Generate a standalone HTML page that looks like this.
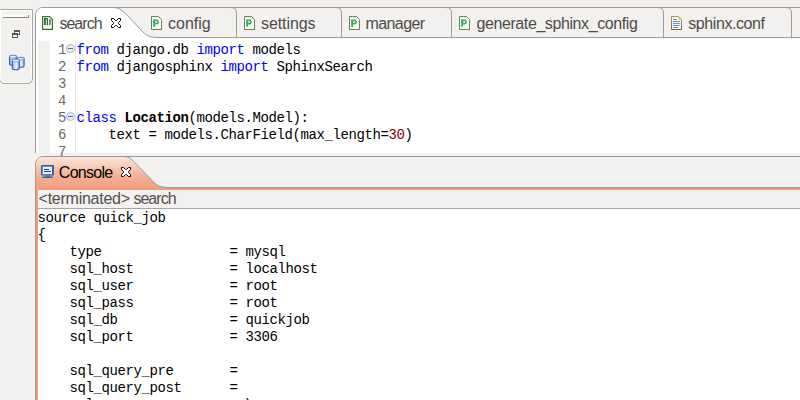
<!DOCTYPE html>
<html><head><meta charset="utf-8">
<style>
html,body{margin:0;padding:0;}
body{width:800px;height:400px;overflow:hidden;position:relative;background:#f2f1f0;font-family:"Liberation Sans",sans-serif;}
svg.full{position:absolute;left:0;top:0;width:800px;height:400px;}
.lbl{position:absolute;height:20px;line-height:20px;font-size:16px;color:#4e4b47;white-space:pre;}
.code{position:absolute;font-family:"Liberation Mono",monospace;font-size:14px;letter-spacing:-0.4px;line-height:17px;white-space:pre;color:#000;}
.ln{position:absolute;font-family:"Liberation Mono",monospace;font-size:14px;letter-spacing:-0.4px;line-height:17px;white-space:pre;color:#6e6a66;}
.kw{color:#0000ff;}
.num{color:#800000;}
.b{font-weight:bold;}
svg.ic{position:absolute;overflow:visible;}
</style></head>
<body>
<svg class="full" viewBox="0 0 800 400">
  <defs>
    <linearGradient id="og" x1="0" y1="157" x2="0" y2="190" gradientUnits="userSpaceOnUse">
      <stop offset="0" stop-color="#fbe6dc"/>
      <stop offset="0.5" stop-color="#f5b59c"/>
      <stop offset="1" stop-color="#f29c7c"/>
    </linearGradient>
  </defs>
  <!-- left trim panel -->
  <path d="M-1 9 H33 V78 Q33 84 27 84 H5 Q-1 84 -1 78 Z" fill="#f2f1f0"/>
  <path d="M0.5 84 V10.5 H31.5" fill="none" stroke="#ffffff"/>
  <path d="M31.5 10.5 V78 Q31.5 82.5 27 82.5 H5 Q0.5 82.5 0.5 78" fill="none" stroke="#ffffff"/>
  <path d="M-1 9.5 H32.5 V78 Q32.5 83.5 27 83.5 H5 Q-0.5 83.5 -0.5 78" fill="none" stroke="#aaa6a0"/>
  <rect x="3" y="15" width="25" height="2" fill="#ffffff"/>
  <rect x="3" y="17" width="26" height="1" fill="#8c8781"/>
  <rect x="28" y="15" width="1" height="3" fill="#8c8781"/>
  <!-- restore icon -->
  <g shape-rendering="crispEdges">
    <rect x="13" y="29" width="8" height="7" fill="#ffffff" opacity="0.4"/>
    <rect x="11" y="32" width="8" height="7" fill="#ffffff" opacity="0.4"/>
    <rect x="14" y="30" width="6" height="5" fill="#5a554f"/>
    <rect x="15" y="32" width="4" height="2" fill="#ffffff"/>
    <rect x="12" y="33" width="6" height="5" fill="#5a554f"/>
    <rect x="13" y="35" width="4" height="2" fill="#ffffff"/>
  </g>
  <!-- database icon -->
  <linearGradient id="cyl" x1="0" y1="0" x2="1" y2="0">
    <stop offset="0" stop-color="#93acd8"/>
    <stop offset="0.55" stop-color="#f2f6fc"/>
    <stop offset="1" stop-color="#8ea8d6"/>
  </linearGradient>
  <g stroke="#2d5fb5" stroke-width="1.1">
    <path d="M9.5 56.8 V63.7 A3.6 1.6 0 0 0 16.7 63.7 V56.8 A3.6 1.6 0 0 0 9.5 56.8 Z" fill="url(#cyl)"/>
    <ellipse cx="13.1" cy="56.8" rx="3.6" ry="1.3" fill="#e9eff9" stroke="#6f92cc" stroke-width="0.8"/>
    <path d="M17.5 58.8 V65.7 A3.3 1.6 0 0 0 24.1 65.7 V58.8 A3.3 1.6 0 0 0 17.5 58.8 Z" fill="url(#cyl)"/>
    <ellipse cx="20.8" cy="58.8" rx="3.3" ry="1.3" fill="#e9eff9" stroke="#6f92cc" stroke-width="0.8"/>
    <path d="M12.3 60.6 V68.2 A3.5 1.6 0 0 0 19.3 68.2 V60.6 A3.5 1.6 0 0 0 12.3 60.6 Z" fill="url(#cyl)"/>
    <ellipse cx="15.8" cy="60.6" rx="3.5" ry="1.3" fill="#e9eff9" stroke="#6f92cc" stroke-width="0.8"/>
  </g>

  <!-- editor frame -->
    <rect x="36" y="8" width="764" height="29.5" fill="#f2f1f0"/>
  <path d="M36 38 V13.5 C36 12 39.5 8 41.5 8 H113 C118 8 121 9.5 125 13 L143 32 C147 36 151 37.5 157 37.5 H36 Z" fill="#ffffff"/>
  <rect x="36" y="37" width="764" height="116" fill="#ffffff"/>
  <path d="M35.5 153 V13.5 C35.5 12 39.5 7.5 41.5 7.5 H800" fill="none" stroke="#9e9a95"/>
  <path d="M113 7.5 C118 7.5 121 9.5 125 13 L143 32 C147 36 151 37.5 157 37.5 H800" fill="none" stroke="#9e9a95"/>
  <path d="M231 7.5 Q236.5 7.5 236.5 13 V37.5" fill="none" stroke="#9e9a95"/>
  <path d="M336 7.5 Q341.5 7.5 341.5 13 V37.5" fill="none" stroke="#9e9a95"/>
  <path d="M446 7.5 Q451.5 7.5 451.5 13 V37.5" fill="none" stroke="#9e9a95"/>
  <path d="M658 7.5 Q663.5 7.5 663.5 13 V37.5" fill="none" stroke="#9e9a95"/>
  <path d="M786 7.5 Q791.5 7.5 791.5 13 V37.5" fill="none" stroke="#9e9a95"/>
  <rect x="38" y="41" width="12" height="112" fill="#f2f1f0"/>
  <line x1="75.5" y1="41" x2="75.5" y2="153" stroke="#e8e8e8"/>

  <!-- tab icons -->
  <g id="ic-search">
    <path d="M42.6 16.6 H49.6 L52.4 19.4 V29.4 H42.6 Z" fill="#ffffff" stroke="#4a6a2a" stroke-width="1.2"/>
    <path d="M44 25 V18 H47 Q48 18 48 19 V25 H46.8 V19.3 H45.8 V25 Z" fill="#1a6a38"/>
    <rect x="49" y="19" width="1.8" height="6" fill="#4a955e"/>
  </g>
  <g id="icP">
    <path d="M151.5 16.5 H158.5 L161.5 19.5 V29.5 H151.5 Z" fill="#ffffff" stroke="#5f7040"/>
    <path d="M151.5 16.5 H158.5 L161.5 19.5 V29.5 H151.5 Z" fill="none" stroke="#8aa070" stroke-dasharray="1 2"/>
    <rect x="153.2" y="19.5" width="1.9" height="7.3" fill="#2db34a"/>
    <rect x="153.2" y="19.5" width="1" height="3" fill="#5a8ad8"/>
    <path d="M155 19.5 H156.3 Q158.8 19.5 158.8 22 Q158.8 24.5 156.3 24.5 H155 V23.1 H156.2 Q157.3 23.1 157.3 22 Q157.3 20.9 156.2 20.9 H155 Z" fill="#2db34a"/>
    <rect x="155" y="20.9" width="1.5" height="2.2" fill="#b8d0f0"/>
  </g>
  <use href="#icP" x="93"/>
  <use href="#icP" x="198"/>
  <use href="#icP" x="308"/>
  <g id="ic-conf">
    <linearGradient id="gold" x1="0" y1="0" x2="0" y2="1"><stop offset="0" stop-color="#b8963e"/><stop offset="1" stop-color="#74683a"/></linearGradient>
    <path d="M671.5 16.5 H678.5 L681.5 19.5 V29.5 H671.5 Z" fill="#f4f7fc" stroke="url(#gold)"/>
    <path d="M678.5 16.5 V19.5 H681.5 Z" fill="#d9b860"/>
    <g stroke="#7d93bd" stroke-width="1">
      <line x1="673" y1="19.5" x2="677" y2="19.5"/>
      <line x1="673" y1="21.5" x2="680" y2="21.5"/>
      <line x1="673" y1="23.5" x2="680" y2="23.5"/>
      <line x1="673" y1="25.5" x2="680" y2="25.5"/>
      <line x1="673" y1="27.5" x2="678" y2="27.5"/>
    </g>
  </g>
  <!-- close X -->
  <path id="xs" d="M111.5 18.5 H113.5 L115.5 20.5 H116.5 L118.5 18.5 H120.5 V20.5 L118.5 22.5 V23.5 L120.5 25.5 V27.5 H118.5 L116.5 25.5 H115.5 L113.5 27.5 H111.5 V25.5 L113.5 23.5 V22.5 L111.5 20.5 Z" fill="#ffffff" stroke="#000000"/>
  
  <!-- fold icons -->
  <g id="fold">
    <circle cx="70.5" cy="48.5" r="4" fill="#e6eef7" stroke="#a9b6c6"/>
    <line x1="68" y1="48.5" x2="73" y2="48.5" stroke="#5c6a7a"/>
  </g>
  <use href="#fold" y="68"/>

  <!-- console frame -->
  <rect x="36" y="157" width="764" height="243" fill="#ffffff"/>
  <rect x="36" y="157" width="764" height="30" fill="#f2f1f0"/>
  <path d="M36 190 V162.5 C36 161 39.5 157 41.5 157 H123.5 C128.5 157 131 158.5 134 161.7 L153 181.6 C157 185.8 161 187.5 168 187.5 H800 V190 Z" fill="url(#og)"/>
  <path d="M35.5 400 V162.5 C35.5 161 39.5 156.5 41.5 156.5 H800" fill="none" stroke="#9e9a95"/>
  <path d="M123.5 156.5 C128.5 156.5 131 158.5 134 161.7 L153 181.6 C157 185.8 161 187.5 168 187.5 H800" fill="none" stroke="#9e9a95"/>
  <rect x="36" y="188" width="764" height="2" fill="#f29c7c"/>
  <rect x="36" y="190" width="2" height="210" fill="#f29c7c"/>
  <rect x="38" y="190" width="762" height="18" fill="#f2f1f0"/>
  <line x1="38" y1="208.5" x2="800" y2="208.5" stroke="#a8a49f"/>

  <use href="#xs" x="10" y="149"/>
  <!-- console icon -->
  <rect x="41" y="165" width="13" height="10.5" rx="1" fill="#2d64b8"/>
  <rect x="42.7" y="166.7" width="9.3" height="7.5" fill="#e6f0fa"/>
  <line x1="44" y1="169.5" x2="49" y2="169.5" stroke="#2a4a8a"/>
  <line x1="44" y1="171.5" x2="51" y2="171.5" stroke="#2a4a8a"/>
  <rect x="45.5" y="175.5" width="4.5" height="1.2" fill="#2d64b8"/>
  <rect x="42" y="176.5" width="11" height="1.5" rx="0.7" fill="#2d64b8"/>
</svg>

<!-- tab labels -->
<div class="lbl" style="left:59.4px;top:14px;letter-spacing:-0.96px">search</div>
<div class="lbl" style="left:168.1px;top:14px;letter-spacing:-0.02px">config</div>
<div class="lbl" style="left:261px;top:14px;letter-spacing:-0.09px">settings</div>
<div class="lbl" style="left:365.6px;top:14px;letter-spacing:-0.62px">manager</div>
<div class="lbl" style="left:476.5px;top:14px;letter-spacing:-0.41px">generate_sphinx_config</div>
<div class="lbl" style="left:688.2px;top:14px;letter-spacing:-0.41px">sphinx.conf</div>
<div class="lbl" style="left:58.8px;top:163px;letter-spacing:-0.72px;color:#000">Console</div>
<div class="lbl" style="left:38.6px;top:189px;letter-spacing:-0.26px;color:#524f4b">&lt;terminated&gt;</div>
<div class="lbl" style="left:133.4px;top:189px;letter-spacing:-0.96px;color:#524f4b">search</div>

<!-- code -->
<div class="ln" style="left:58px;top:42px">1
2
3
4
5
6
7</div>
<div class="code" style="left:76.5px;top:42px"><span class="kw">from</span> django.db <span class="kw">import</span> models
<span class="kw">from</span> djangosphinx <span class="kw">import</span> SphinxSearch


<span class="kw">class</span> <span class="b">Location</span>(models.Model):
    text = models.CharField(max_length=<span class="num">30</span>)
</div>

<div class="code" style="left:37.5px;top:210px">source quick_job
{
    type                = mysql
    sql_host            = localhost
    sql_user            = root
    sql_pass            = root
    sql_db              = quickjob
    sql_port            = 3306

    sql_query_pre       =
    sql_query_post      =
    sql_query           = \
</div>
</body></html>
